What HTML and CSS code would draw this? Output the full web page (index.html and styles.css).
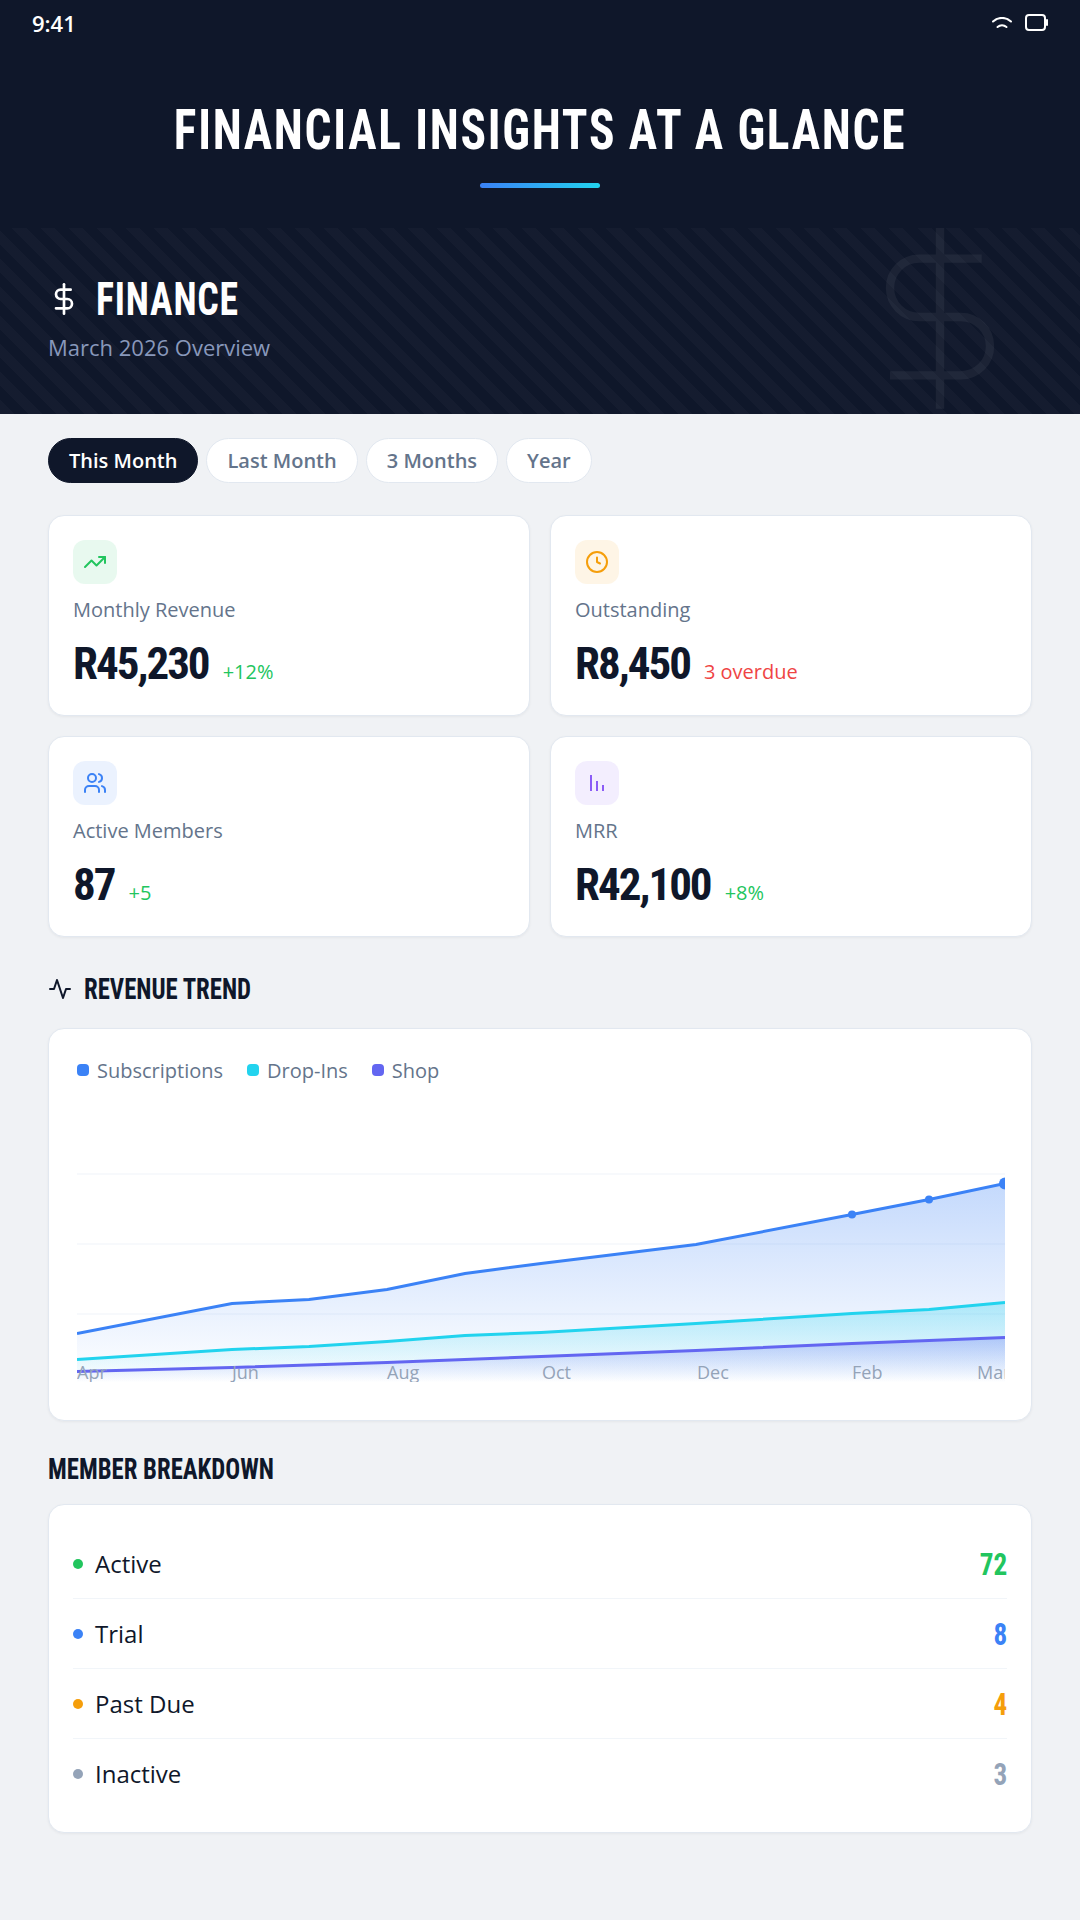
FILE: index.html
```html
<!DOCTYPE html>
<html lang="en">
<head>
  <meta charset="UTF-8" />
  <meta name="viewport" content="width=device-width, initial-scale=1.0" />
  <title>Financial Insights</title>
  <link rel="stylesheet" href="styles.css">
</head>
<body>
  <header class="hero">
    <div class="status-bar">
      <span class="status-time">9:41</span>
      <span class="status-icons">
        <svg class="wifi-icon" viewBox="0 0 20 12" fill="none" stroke="#fff" stroke-width="2" stroke-linecap="round">
          <path d="M1 4.5a13 13 0 0 1 18 0"/>
          <path d="M5.5 10a7 7 0 0 1 9 0"/>
        </svg>
        <svg class="battery-icon" viewBox="0 0 23 17" fill="none" stroke="#fff" stroke-width="2" stroke-linecap="round">
          <rect x="1" y="1" width="19" height="15" rx="3"/>
          <path d="M22 6v5"/>
        </svg>
      </span>
    </div>
    <h1 class="hero-title">FINANCIAL INSIGHTS AT A GLANCE</h1>
    <div class="hero-rule"></div>
  </header>

  <section class="banner">
    <svg class="banner-watermark" viewBox="0 0 24 24" fill="none" stroke="#fff" stroke-width="1">
      <path d="M12 1v22"/>
      <path d="M17 5H9.5a3.5 3.5 0 0 0 0 7h5a3.5 3.5 0 0 1 0 7H6"/>
    </svg>
    <div class="banner-head">
      <svg class="banner-icon" viewBox="0 0 24 24" fill="none" stroke="#fff" stroke-width="2" stroke-linecap="round" stroke-linejoin="round">
        <path d="M12 1v22"/>
        <path d="M17 5H9.5a3.5 3.5 0 0 0 0 7h5a3.5 3.5 0 0 1 0 7H6"/>
      </svg>
      <h2 class="banner-title">FINANCE</h2>
    </div>
    <div class="banner-sub">March 2026 Overview</div>
  </section>

  <main class="content">
    <div class="tabs">
      <span class="tab tab-active">This Month</span>
      <span class="tab">Last Month</span>
      <span class="tab">3 Months</span>
      <span class="tab">Year</span>
    </div>

    <div class="stats">
      <div class="card stat">
        <div class="stat-icon bg-green">
          <svg viewBox="0 0 24 24" fill="none" stroke="#22c55e" stroke-width="2" stroke-linecap="round" stroke-linejoin="round">
            <polyline points="22 7 13.5 15.5 8.5 10.5 2 17"/>
            <polyline points="16 7 22 7 22 13"/>
          </svg>
        </div>
        <div class="stat-label">Monthly Revenue</div>
        <div class="stat-row">
          <span class="stat-value">R45,230</span>
          <span class="stat-delta up">+12%</span>
        </div>
      </div>

      <div class="card stat">
        <div class="stat-icon bg-orange">
          <svg viewBox="0 0 24 24" fill="none" stroke="#f59e0b" stroke-width="2" stroke-linecap="round" stroke-linejoin="round">
            <circle cx="12" cy="12" r="10"/>
            <polyline points="12 7.5 12 12 15 13.5"/>
          </svg>
        </div>
        <div class="stat-label">Outstanding</div>
        <div class="stat-row">
          <span class="stat-value">R8,450</span>
          <span class="stat-delta down">3 overdue</span>
        </div>
      </div>

      <div class="card stat">
        <div class="stat-icon bg-blue">
          <svg viewBox="0 0 24 24" fill="none" stroke="#3b82f6" stroke-width="2" stroke-linecap="round" stroke-linejoin="round">
            <path d="M16 21v-2a4 4 0 0 0-4-4H6a4 4 0 0 0-4 4v2"/>
            <circle cx="9" cy="7" r="4"/>
            <path d="M22 21v-2a4 4 0 0 0-3-3.87"/>
            <path d="M16 3.13a4 4 0 0 1 0 7.75"/>
          </svg>
        </div>
        <div class="stat-label">Active Members</div>
        <div class="stat-row">
          <span class="stat-value">87</span>
          <span class="stat-delta up">+5</span>
        </div>
      </div>

      <div class="card stat">
        <div class="stat-icon bg-purple">
          <svg viewBox="0 0 24 24" fill="none" stroke="#8b5cf6" stroke-width="2">
            <path d="M6 4v16"/>
            <path d="M12 10v10"/>
            <path d="M18 14v6"/>
          </svg>
        </div>
        <div class="stat-label">MRR</div>
        <div class="stat-row">
          <span class="stat-value">R42,100</span>
          <span class="stat-delta up">+8%</span>
        </div>
      </div>
    </div>

    <h3 class="section-title title-revenue">
      <svg viewBox="0 0 24 24" fill="none" stroke="#0f172a" stroke-width="2" stroke-linecap="round" stroke-linejoin="round">
        <polyline points="22 12 18 12 15 21 9 3 6 12 2 12"/>
      </svg>
      <span class="section-text">REVENUE TREND</span>
    </h3>

    <div class="card chart-card">
      <div class="legend">
        <span class="legend-item"><i class="legend-dot dot-blue"></i>Subscriptions</span>
        <span class="legend-item"><i class="legend-dot dot-cyan"></i>Drop-Ins</span>
        <span class="legend-item"><i class="legend-dot dot-indigo"></i>Shop</span>
      </div>
      <svg class="chart" viewBox="77 1102 928 280" width="928" height="280">
        <defs>
          <linearGradient id="fillBlue" x1="0" y1="0" x2="0" y2="1">
            <stop offset="0" stop-color="#3b82f6" stop-opacity="0.3"/>
            <stop offset="1" stop-color="#3b82f6" stop-opacity="0"/>
          </linearGradient>
          <linearGradient id="fillCyan" x1="0" y1="0" x2="0" y2="1">
            <stop offset="0" stop-color="#22d3ee" stop-opacity="0.3"/>
            <stop offset="1" stop-color="#22d3ee" stop-opacity="0"/>
          </linearGradient>
          <linearGradient id="fillIndigo" x1="0" y1="0" x2="0" y2="1">
            <stop offset="0" stop-color="#6366f1" stop-opacity="0.3"/>
            <stop offset="1" stop-color="#6366f1" stop-opacity="0"/>
          </linearGradient>
        </defs>

        <g class="grid-lines">
          <path d="M77 1174H1005"/>
          <path d="M77 1244H1005"/>
          <path d="M77 1314H1005"/>
        </g>

        <g transform="translate(0 0.5)">
          <path fill="url(#fillBlue)" d="M77 1333L232 1303L309 1299L387 1289L465 1273L541 1263L696 1244L852 1214L929 1199L1005 1183V1382H77Z"/>
          <path fill="url(#fillCyan)" d="M77 1359L232 1349L309 1346L387 1341L465 1335L541 1332L696 1323L852 1313L929 1309L1005 1302V1382H77Z"/>
          <path fill="url(#fillIndigo)" d="M77 1371L232 1367L387 1362L541 1356L696 1350L852 1343L929 1340L1005 1337V1382H77Z"/>

          <path class="line line-blue" d="M77 1333L232 1303L309 1299L387 1289L465 1273L541 1263L696 1244L852 1214L929 1199L1005 1183"/>
          <path class="line line-cyan" d="M77 1359L232 1349L309 1346L387 1341L465 1335L541 1332L696 1323L852 1313L929 1309L1005 1302"/>
          <path class="line line-indigo" d="M77 1371L232 1367L387 1362L541 1356L696 1350L852 1343L929 1340L1005 1337"/>

          <circle cx="852" cy="1214" r="4" fill="#3b82f6"/>
          <circle cx="929" cy="1199" r="4" fill="#3b82f6"/>
          <circle cx="1005" cy="1183" r="6" fill="#3b82f6"/>
        </g>

        <g class="axis-labels">
          <text x="77" y="1379">Apr</text>
          <text x="232" y="1379">Jun</text>
          <text x="387" y="1379">Aug</text>
          <text x="542" y="1379">Oct</text>
          <text x="697" y="1379">Dec</text>
          <text x="852" y="1379">Feb</text>
          <text x="977" y="1379">Mar</text>
        </g>
      </svg>
    </div>

    <h3 class="section-title title-members">
      <span class="section-text">MEMBER BREAKDOWN</span>
    </h3>

    <div class="card members">
      <div class="member-row">
        <span class="member-name"><i class="member-dot dot-green"></i>Active</span>
        <span class="member-count text-green">72</span>
      </div>
      <div class="member-row">
        <span class="member-name"><i class="member-dot dot-blue"></i>Trial</span>
        <span class="member-count text-blue">8</span>
      </div>
      <div class="member-row">
        <span class="member-name"><i class="member-dot dot-orange"></i>Past Due</span>
        <span class="member-count text-orange">4</span>
      </div>
      <div class="member-row">
        <span class="member-name"><i class="member-dot dot-slate"></i>Inactive</span>
        <span class="member-count text-slate">3</span>
      </div>
    </div>
  </main>
</body>
</html>
```

FILE: styles.css
```css
* {
  box-sizing: border-box;
}
body {
  margin: 0;
  width: 1080px;
  min-height: 1920px;
  background-color: #f0f2f5;
  color: #0f172a;
  font-family: 'Open Sans', 'Noto Sans', sans-serif;
}

/* Dark header */
.hero {
  height: 228px;
  background-color: #0f172a;
  color: #fff;
  text-align: center;
}
.status-bar {
  display: flex;
  justify-content: space-between;
  align-items: center;
  height: 45px;
  padding: 0 32px;
}
.status-time {
  font-size: 22px;
  font-weight: 600;
}
.status-icons {
  display: flex;
  align-items: center;
  gap: 13px;
}
.wifi-icon {
  width: 20px;
  height: 12px;
}
.battery-icon {
  width: 23px;
  height: 17px;
}
.hero-title {
  margin: 53px 0 0;
  font-family: 'Roboto', sans-serif;
  font-stretch: 75%;
  font-size: 56px;
  line-height: 64px;
  font-weight: 700;
  letter-spacing: 2px;
  transform: scaleX(0.847);
}
.hero-rule {
  width: 120px;
  height: 5px;
  margin: 21px auto 0;
  border-radius: 3px;
  background: linear-gradient(90deg, #3b82f6, #22d3ee);
}

/* Finance banner */
.banner {
  position: relative;
  height: 186px;
  padding: 46px 48px 0;
  overflow: hidden;
  background-color: #0f172a;
  background-image: repeating-linear-gradient(45deg, rgba(255, 255, 255, 0.025) 0, rgba(255, 255, 255, 0.025) 10px, transparent 10px, transparent 20px);
  color: #fff;
}
.banner-watermark {
  position: absolute;
  top: -11px;
  right: 40px;
  width: 200px;
  height: 200px;
  opacity: 0.05;
}
.banner-head {
  display: flex;
  align-items: center;
  gap: 16px;
}
.banner-icon {
  width: 32px;
  height: 32px;
}
.banner-title {
  margin: 0;
  font-family: 'Roboto', sans-serif;
  font-stretch: 75%;
  font-size: 46px;
  line-height: 50px;
  font-weight: 700;
  letter-spacing: 1px;
  transform: scaleX(0.82);
  transform-origin: left;
}
.banner-sub {
  margin-top: 8px;
  font-size: 22px;
  line-height: 30px;
  color: #8898bb;
}

/* Main content */
.content {
  padding: 24px 48px 0;
}
.tabs {
  display: flex;
  gap: 8px;
  margin-bottom: 32px;
}
.tab {
  display: flex;
  align-items: center;
  height: 45px;
  padding: 0 20px;
  border: 1px solid #e2e8f0;
  border-radius: 23px;
  background-color: #fff;
  color: #64748b;
  font-size: 20px;
  font-weight: 600;
}
.tab-active {
  border-color: #0f172a;
  background-color: #0f172a;
  color: #fff;
}

.card {
  border: 1px solid #e2e8f0;
  border-radius: 16px;
  background-color: #fff;
  box-shadow: 0 1px 3px rgba(0, 0, 0, 0.05);
}
.stats {
  display: grid;
  grid-template-columns: 1fr 1fr;
  gap: 20px;
}
.stat {
  height: 201px;
  padding: 24px;
}
.stat-icon {
  display: flex;
  justify-content: center;
  align-items: center;
  width: 44px;
  height: 44px;
  border-radius: 12px;
}
.stat-icon svg {
  width: 24px;
  height: 24px;
}
.bg-green { background-color: rgba(34, 197, 94, 0.1); }
.bg-orange { background-color: rgba(245, 158, 11, 0.1); }
.bg-blue { background-color: rgba(59, 130, 246, 0.1); }
.bg-purple { background-color: rgba(139, 92, 246, 0.1); }
.stat-label {
  margin-top: 12px;
  font-size: 20px;
  line-height: 28px;
  color: #64748b;
}
.stat-row {
  display: flex;
  align-items: baseline;
  gap: 14px;
  margin-top: 12px;
}
.stat-value {
  font-family: 'Roboto', sans-serif;
  font-stretch: 75%;
  font-size: 45px;
  line-height: 56px;
  font-weight: 700;
  letter-spacing: -2px;
}
.stat-delta {
  font-size: 20px;
  font-weight: 500;
}
.up { color: #22c55e; }
.down { color: #ef4444; }

/* Section headings */
.section-title {
  display: flex;
  align-items: center;
  gap: 12px;
  font-family: 'Roboto', sans-serif;
  font-stretch: 75%;
  font-size: 30px;
  line-height: 32px;
  font-weight: 700;
}
.section-title svg {
  width: 24px;
  height: 24px;
}
.section-text {
  transform: scaleX(0.825);
  transform-origin: left;
}
.title-revenue {
  margin: 36px 0 23px;
}
.title-members {
  margin: 32px 0 19px;
}

/* Chart */
.chart-card {
  height: 393px;
  padding: 25px 28px 24px;
}
.legend {
  display: flex;
  gap: 24px;
  height: 24px;
  align-items: center;
  margin-top: 4px;
}
.legend-item {
  display: flex;
  align-items: center;
  gap: 8px;
  font-size: 20px;
  color: #64748b;
}
.legend-dot {
  width: 12px;
  height: 12px;
  border-radius: 4px;
}
.chart {
  display: block;
  margin-top: 20px;
  overflow: hidden;
}
.grid-lines path {
  stroke: #f4f7fb;
  stroke-width: 1.5;
  fill: none;
}
.line {
  fill: none;
  stroke-width: 3;
}
.line-blue { stroke: #3b82f6; }
.line-cyan { stroke: #22d3ee; }
.line-indigo { stroke: #6366f1; }
.axis-labels text {
  font-size: 18px;
  fill: #94a3b8;
}
.dot-blue { background-color: #3b82f6; }
.dot-cyan { background-color: #22d3ee; }
.dot-indigo { background-color: #6366f1; }
.dot-green { background-color: #22c55e; }
.dot-orange { background-color: #f59e0b; }
.dot-slate { background-color: #94a3b8; }

/* Member list */
.members {
  padding: 24px 24px 23px;
}
.member-row {
  display: flex;
  justify-content: space-between;
  align-items: center;
  height: 70px;
  border-bottom: 1px solid #f1f5f9;
}
.member-row:last-child {
  border-bottom-color: transparent;
}
.member-name {
  display: flex;
  align-items: center;
  gap: 12px;
  font-size: 24px;
  color: #0f172a;
}
.member-dot {
  width: 10px;
  height: 10px;
  border-radius: 50%;
}
.member-count {
  display: inline-block;
  font-family: 'Roboto', sans-serif;
  font-stretch: 75%;
  font-size: 32px;
  font-weight: 700;
  transform: scaleX(0.85);
  transform-origin: right;
}
.text-green { color: #22c55e; }
.text-blue { color: #3b82f6; }
.text-orange { color: #f59e0b; }
.text-slate { color: #94a3b8; }
```
